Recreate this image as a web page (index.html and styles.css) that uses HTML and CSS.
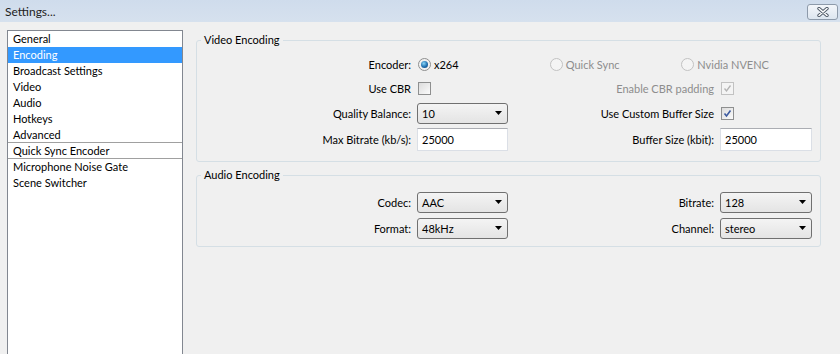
FILE: index.html
```html
<!DOCTYPE html>
<html lang="en">

<head>
    <meta charset="UTF-8">
    <meta name="viewport" content="width=device-width, initial-scale=1.0">
    <title>Settings...</title>
    <link rel="stylesheet" href="styles.css">
</head>

<body>
    <header class="titlebar">
        <span class="title">Settings...</span>
        <button class="close">
            <svg width="14" height="10" viewBox="0 0 14 10">
                <path d="M3 1.5 L11 8.5 M11 1.5 L3 8.5" stroke="#4d5866" stroke-width="3.4" stroke-linecap="round" />
                <path d="M3 1.5 L11 8.5 M11 1.5 L3 8.5" stroke="#ffffff" stroke-width="1.6" stroke-linecap="round" />
            </svg>
        </button>
    </header>
    <main class="window">
        <ul class="nav">
            <li>General</li>
            <li class="selected">Encoding</li>
            <li>Broadcast Settings</li>
            <li>Video</li>
            <li>Audio</li>
            <li>Hotkeys</li>
            <li class="split">Advanced</li>
            <li class="split">Quick Sync Encoder</li>
            <li>Microphone Noise Gate</li>
            <li>Scene Switcher</li>
        </ul>
        <div class="content">
            <fieldset class="group">
                <legend>Video Encoding</legend>
                <div class="grid video">
                    <div class="label">Encoder:</div>
                    <div class="radios">
                        <span class="radio-item"><span class="radio on"></span>x264</span>
                        <span class="radio-item disabled"><span class="radio"></span>Quick Sync</span>
                        <span class="radio-item disabled"><span class="radio"></span>Nvidia NVENC</span>
                    </div>

                    <div class="label">Use CBR</div>
                    <div><span class="check"></span></div>
                    <div class="label disabled">Enable CBR padding</div>
                    <div>
                        <span class="check disabled">
                            <svg width="11" height="11" viewBox="0 0 11 11"><path d="M2.5 5.5 L4.5 8 L8.5 2.5" fill="none" stroke="#b3b3b3" stroke-width="1.3" /></svg>
                        </span>
                    </div>

                    <div class="label">Quality Balance:</div>
                    <div class="combo"><span>10</span><svg width="7" height="4" viewBox="0 0 7 4"><path d="M0 0 H7 L3.5 4 Z" fill="#000" /></svg></div>
                    <div class="label">Use Custom Buffer Size</div>
                    <div>
                        <span class="check">
                            <svg width="11" height="11" viewBox="0 0 11 11"><path d="M2.5 5.5 L4.5 8 L8.5 2.5" fill="none" stroke="#3d5ba0" stroke-width="1.6" /></svg>
                        </span>
                    </div>

                    <div class="label">Max Bitrate (kb/s):</div>
                    <div class="field">25000</div>
                    <div class="label">Buffer Size (kbit):</div>
                    <div class="field">25000</div>
                </div>
            </fieldset>

            <fieldset class="group audio-group">
                <legend>Audio Encoding</legend>
                <div class="grid audio">
                    <div class="label">Codec:</div>
                    <div class="combo"><span>AAC</span><svg width="7" height="4" viewBox="0 0 7 4"><path d="M0 0 H7 L3.5 4 Z" fill="#000" /></svg></div>
                    <div class="label">Bitrate:</div>
                    <div class="combo"><span>128</span><svg width="7" height="4" viewBox="0 0 7 4"><path d="M0 0 H7 L3.5 4 Z" fill="#000" /></svg></div>

                    <div class="label">Format:</div>
                    <div class="combo"><span>48kHz</span><svg width="7" height="4" viewBox="0 0 7 4"><path d="M0 0 H7 L3.5 4 Z" fill="#000" /></svg></div>
                    <div class="label">Channel:</div>
                    <div class="combo"><span>stereo</span><svg width="7" height="4" viewBox="0 0 7 4"><path d="M0 0 H7 L3.5 4 Z" fill="#000" /></svg></div>
                </div>
            </fieldset>
        </div>
    </main>
</body>

</html>
```

FILE: styles.css
```css
* {
    box-sizing: border-box;
}

body {
    margin: 0;
    width: 840px;
    height: 354px;
    overflow: hidden;
    background-color: #f0f0f0;
    font-family: 'Lato', sans-serif;
    font-size: 11px;
    color: #000;
}

.titlebar {
    display: flex;
    align-items: center;
    justify-content: space-between;
    height: 22px;
    padding: 0 2px 0 5px;
    background-image: linear-gradient(to bottom, #cfdcec, #d6e1ee);
}

.title {
    font-size: 12px;
    color: #222;
}

.close {
    display: flex;
    align-items: center;
    justify-content: center;
    width: 31px;
    height: 16px;
    margin-top: 1px;
    padding: 0;
    border: 1px solid #8d9aaa;
    border-radius: 3px;
    background-image: linear-gradient(to bottom, #f3f6fa, #dde6f0);
}

.window {
    display: flex;
    height: 332px;
    padding-left: 7px;
}

.nav {
    width: 176px;
    margin: 8px 0 0 0;
    padding: 0;
    list-style: none;
    background-color: #fff;
    border: 1px solid #828790;
    border-bottom: 0;
}

.nav li {
    height: 16px;
    line-height: 16px;
    padding-left: 5px;
    white-space: nowrap;
}

.nav li.selected {
    background-color: #3399ff;
    color: #fff;
}

.nav li.split {
    border-bottom: 1px solid #a0a0a0;
    height: 16px;
    line-height: 15px;
}

.content {
    width: 625px;
    margin: 11px 0 0 13px;
}

.group {
    margin: 0;
    padding: 5px 0 9px 0;
    border: 1px solid #d5dfe5;
    border-radius: 3px;
}

.group legend {
    margin-left: 4px;
    padding: 0 3px;
    line-height: 14px;
}

.audio-group {
    margin-top: 6px;
    padding: 7px 0 5px 0;
}

.grid {
    display: grid;
    grid-template-columns: 214px 91px 200px 92px;
    column-gap: 6px;
    align-items: center;
}

.video {
    grid-template-rows: 24px 24px 26px 26px;
}

.audio {
    grid-template-rows: 26px 26px;
}

.label {
    text-align: right;
    white-space: nowrap;
}

.disabled {
    color: #8d8d8d;
}

.radios {
    grid-column: 2 / 5;
    display: flex;
}

.radio-item {
    display: flex;
    align-items: center;
    width: 133px;
    white-space: nowrap;
}

.radio {
    position: relative;
    width: 13px;
    height: 13px;
    margin: 0 3px 0 1px;
    border: 1px solid #8e8f8f;
    border-radius: 50%;
    background-image: radial-gradient(circle at 50% 50%, #e6e6e6, #f8f8f8);
}

.radio-item.disabled .radio {
    border-color: #c2c2c2;
    background-image: none;
    background-color: #f4f4f4;
}

.radio.on::after {
    content: "";
    position: absolute;
    left: 2px;
    top: 2px;
    width: 7px;
    height: 7px;
    border-radius: 50%;
    background-image: radial-gradient(circle at 40% 35%, #8ad6f7, #1f6fb0 55%, #153e72);
}

.check {
    display: flex;
    align-items: center;
    justify-content: center;
    width: 13px;
    height: 13px;
    margin-left: 1px;
    border: 1px solid #8e8f8f;
    background-image: linear-gradient(to bottom right, #dcdcdc, #fbfbfb);
}

.check.disabled {
    border-color: #c2c2c2;
    background-image: none;
    background-color: #f4f4f4;
}

.combo {
    display: flex;
    align-items: center;
    justify-content: space-between;
    height: 21px;
    padding: 0 5px 0 4px;
    border: 1px solid #707070;
    border-radius: 3px;
    background-image: linear-gradient(to bottom, #f4f4f4, #e4e4e4);
}

.field {
    display: flex;
    align-items: center;
    height: 23px;
    padding-left: 4px;
    background-color: #fff;
    border: 1px solid #dbdfe6;
    border-top-color: #abadb3;
}
```
